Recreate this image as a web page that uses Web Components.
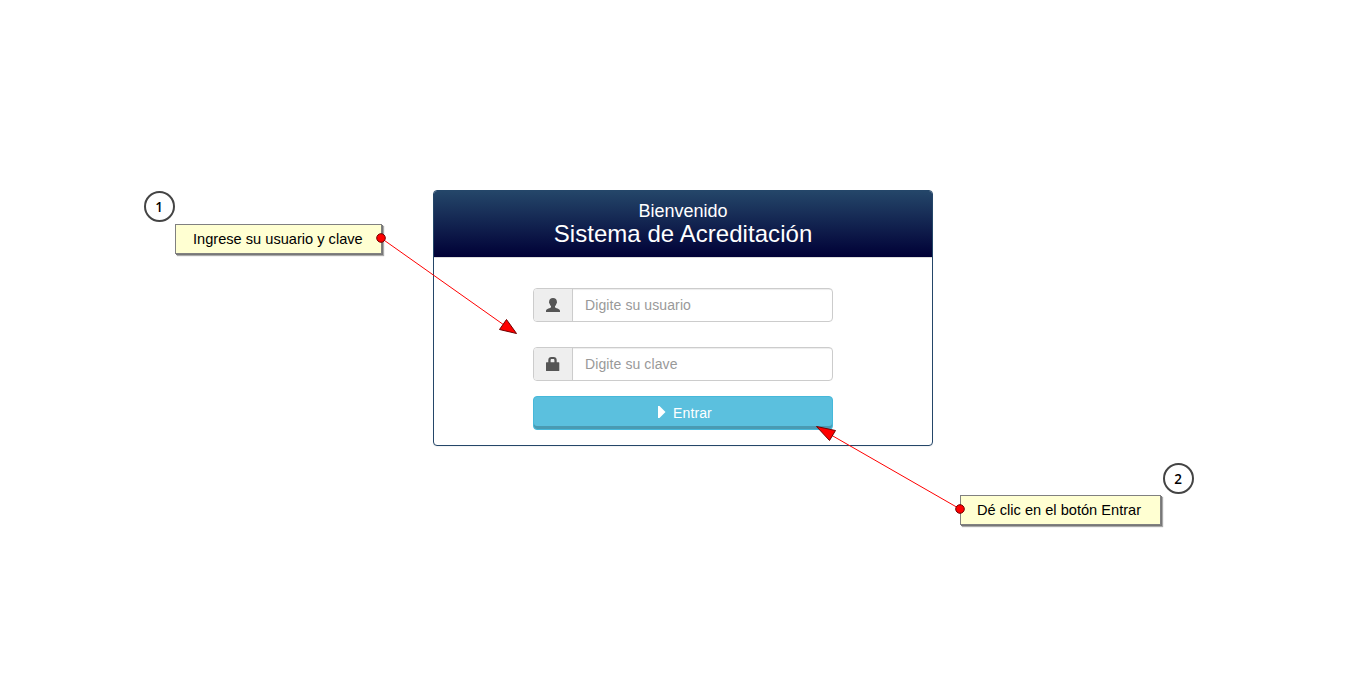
<!DOCTYPE html>
<html lang="es">
<head>
<meta charset="utf-8">
<title>Sistema de Acreditación</title>
<style>
html,body{margin:0;height:100%;background:#fff;overflow:hidden}
body{font-family:"Liberation Sans",Arial,sans-serif}
</style>
</head>
<body>
<login-guide></login-guide>
<script>
function define(name, html) {
  const tpl = document.createElement('template');
  tpl.innerHTML = html;
  customElements.define(name, class extends HTMLElement {
    constructor() {
      super();
      this.attachShadow({mode: 'open'}).appendChild(tpl.content.cloneNode(true));
    }
    connectedCallback() {
      const input = this.shadowRoot.querySelector('input');
      if (input) {
        input.placeholder = this.getAttribute('placeholder') || '';
        input.type = this.getAttribute('type') || 'text';
      }
    }
  });
}

define('login-header', `
<style>
:host{display:block;box-sizing:border-box;height:67px;padding-top:9px;text-align:center;color:#fff;
 background:linear-gradient(#244669,#000036);border-bottom:1px solid #ddd;border-radius:3px 3px 0 0}
.hi{font-size:18px;line-height:22px}
.name{font-size:24px;line-height:24px;letter-spacing:.05px}
</style>
<div class="hi"><slot name="greeting"></slot></div>
<div class="name"><slot></slot></div>`);

define('icon-field', `
<style>
:host{display:flex;height:34px;box-sizing:border-box;border:1px solid #ccc;border-radius:4px;overflow:hidden;background:#fff}
.addon{width:38px;background:#eee;border-right:1px solid #ccc;display:flex;align-items:center;justify-content:center;color:#555}
input{flex:1;min-width:0;border:0;outline:0;padding:0 12px;margin:0;font:14px "Liberation Sans",Arial,sans-serif;letter-spacing:.1px;color:#555;
 background:transparent;box-shadow:inset 0 1px 1px rgba(0,0,0,.075)}
input::placeholder{color:#999;opacity:1}
</style>
<span class="addon"><slot></slot></span><input>`);

define('enter-button', `
<style>
:host{display:block}
button{display:flex;align-items:center;justify-content:center;width:100%;height:34px;box-sizing:border-box;margin:0;padding:0 0 0 4px;
 border:1px solid #46b8da;border-radius:4px;background:#5bc0de;color:#fff;font:14px "Liberation Sans",Arial,sans-serif;letter-spacing:.12px;
 box-shadow:inset 0 -3px 0 #4a9ab2}
svg{margin:-2px 7px 0 0}
</style>
<button><svg width="8" height="12" viewBox="0 0 8 12"><path fill="#fff" d="M0 0h1.500L7.500 6l-6 6H0z"/></svg><slot></slot></button>`);

define('login-panel', `
<style>
:host{display:block;box-sizing:border-box;width:500px;height:256px;border:1px solid #244669;border-radius:4px;background:#fff;
 box-shadow:0 1px 1px rgba(0,0,0,.05)}
form{display:flex;flex-direction:column;width:300px;margin:30px auto 0}
icon-field + icon-field{margin-top:25px}
enter-button{margin-top:15px}
svg{display:block}
</style>
<login-header><span slot="greeting">Bienvenido</span>Sistema de Acreditación</login-header>
<form>
 <icon-field placeholder="Digite su usuario">
  <svg width="14" height="14" viewBox="0 0 14 14"><path fill="#555" d="M7 0C4.500 0 3.200 1.400 3.200 3.300c0 .500-.300.700-.200 1.300.100.700.500.900.700 1.300.300 1 .700 1.700 1.300 2.300v1.100C4.700 10.400 0 10.500 0 13v1h14v-1c0-2.500-4.700-2.600-5-3.700V8.200c.600-.600 1-1.300 1.300-2.300.200-.400.600-.600.700-1.300.100-.600-.200-.800-.200-1.300C10.800 1.400 9.500 0 7 0z"/></svg>
 </icon-field>
 <icon-field placeholder="Digite su clave" type="password">
  <svg width="14" height="14" viewBox="0 0 14 14"><path fill="#555" fill-rule="evenodd" d="M2.300 5.200V3C2.300 1.200 3.500 0 5.300 0h2.400c1.800 0 3 1.200 3 3v2.200h2c.400 0 .600.200.600.500v7.700c0 .400-.200.600-.600.600H.600c-.400 0-.600-.200-.600-.600V5.700c0-.300.200-.500.600-.500zM4.600 5.200h3.800V3.300c0-.800-.400-1.300-1.200-1.300H5.800c-.800 0-1.200.500-1.200 1.300z"/></svg>
 </icon-field>
 <enter-button>Entrar</enter-button>
</form>`);

define('callout-note', `
<style>
:host{position:absolute;box-sizing:border-box;height:30px;padding-left:var(--inset,16.5px);border:1px solid #808080;background:#ffffd2;color:#000;
 font-size:15px;line-height:28px;white-space:nowrap;box-shadow:1px 1px 0 #777,2px 2px 1px #aaa}
span{display:inline-block;transform-origin:left;transform:scaleX(.974)}
</style>
<span><slot></slot></span>`);

define('step-badge', `
<style>
:host{position:absolute;box-sizing:border-box;width:31px;height:31px;border:2px solid #444;border-radius:50%;background:#fff;
 display:flex;align-items:center;justify-content:center;color:#000;font:600 13.5px "Open Sans","Noto Sans",sans-serif}
</style>
<slot></slot>`);

define('pointer-arrows', `
<style>:host{position:absolute;inset:0;pointer-events:none}svg{display:block}</style>
<svg width="1366" height="673" viewBox="0 0 1366 673">
 <g stroke="#f00" stroke-width="1"><path d="M381 238 504 325M960 509 832 435.500"/></g>
 <g fill="#f00" stroke="#700000" stroke-width="1">
  <path d="M516.500 333.500 506.500 319.500 499.500 329.500zM816.500 426.500 835.500 430.500 829.500 440.500z"/>
  <circle cx="381" cy="238" r="4.300"/><circle cx="960" cy="509" r="4.300"/>
 </g>
</svg>`);

define('login-guide', `
<style>
:host{position:relative;display:flex;justify-content:center;align-items:flex-start;box-sizing:border-box;width:1366px;height:673px;padding-top:190px}
.n1{left:175px;top:224px;width:207px}
.n2{left:960px;top:495px;width:201px;--inset:16px}
.b1{left:143.500px;top:191px}
.b2{left:1162.500px;top:463px}
</style>
<login-panel></login-panel>
<callout-note class="n1">Ingrese su usuario y clave</callout-note>
<callout-note class="n2">Dé clic en el botón Entrar</callout-note>
<step-badge class="b1">1</step-badge>
<step-badge class="b2">2</step-badge>
<pointer-arrows></pointer-arrows>`);
</script>
</body>
</html>
